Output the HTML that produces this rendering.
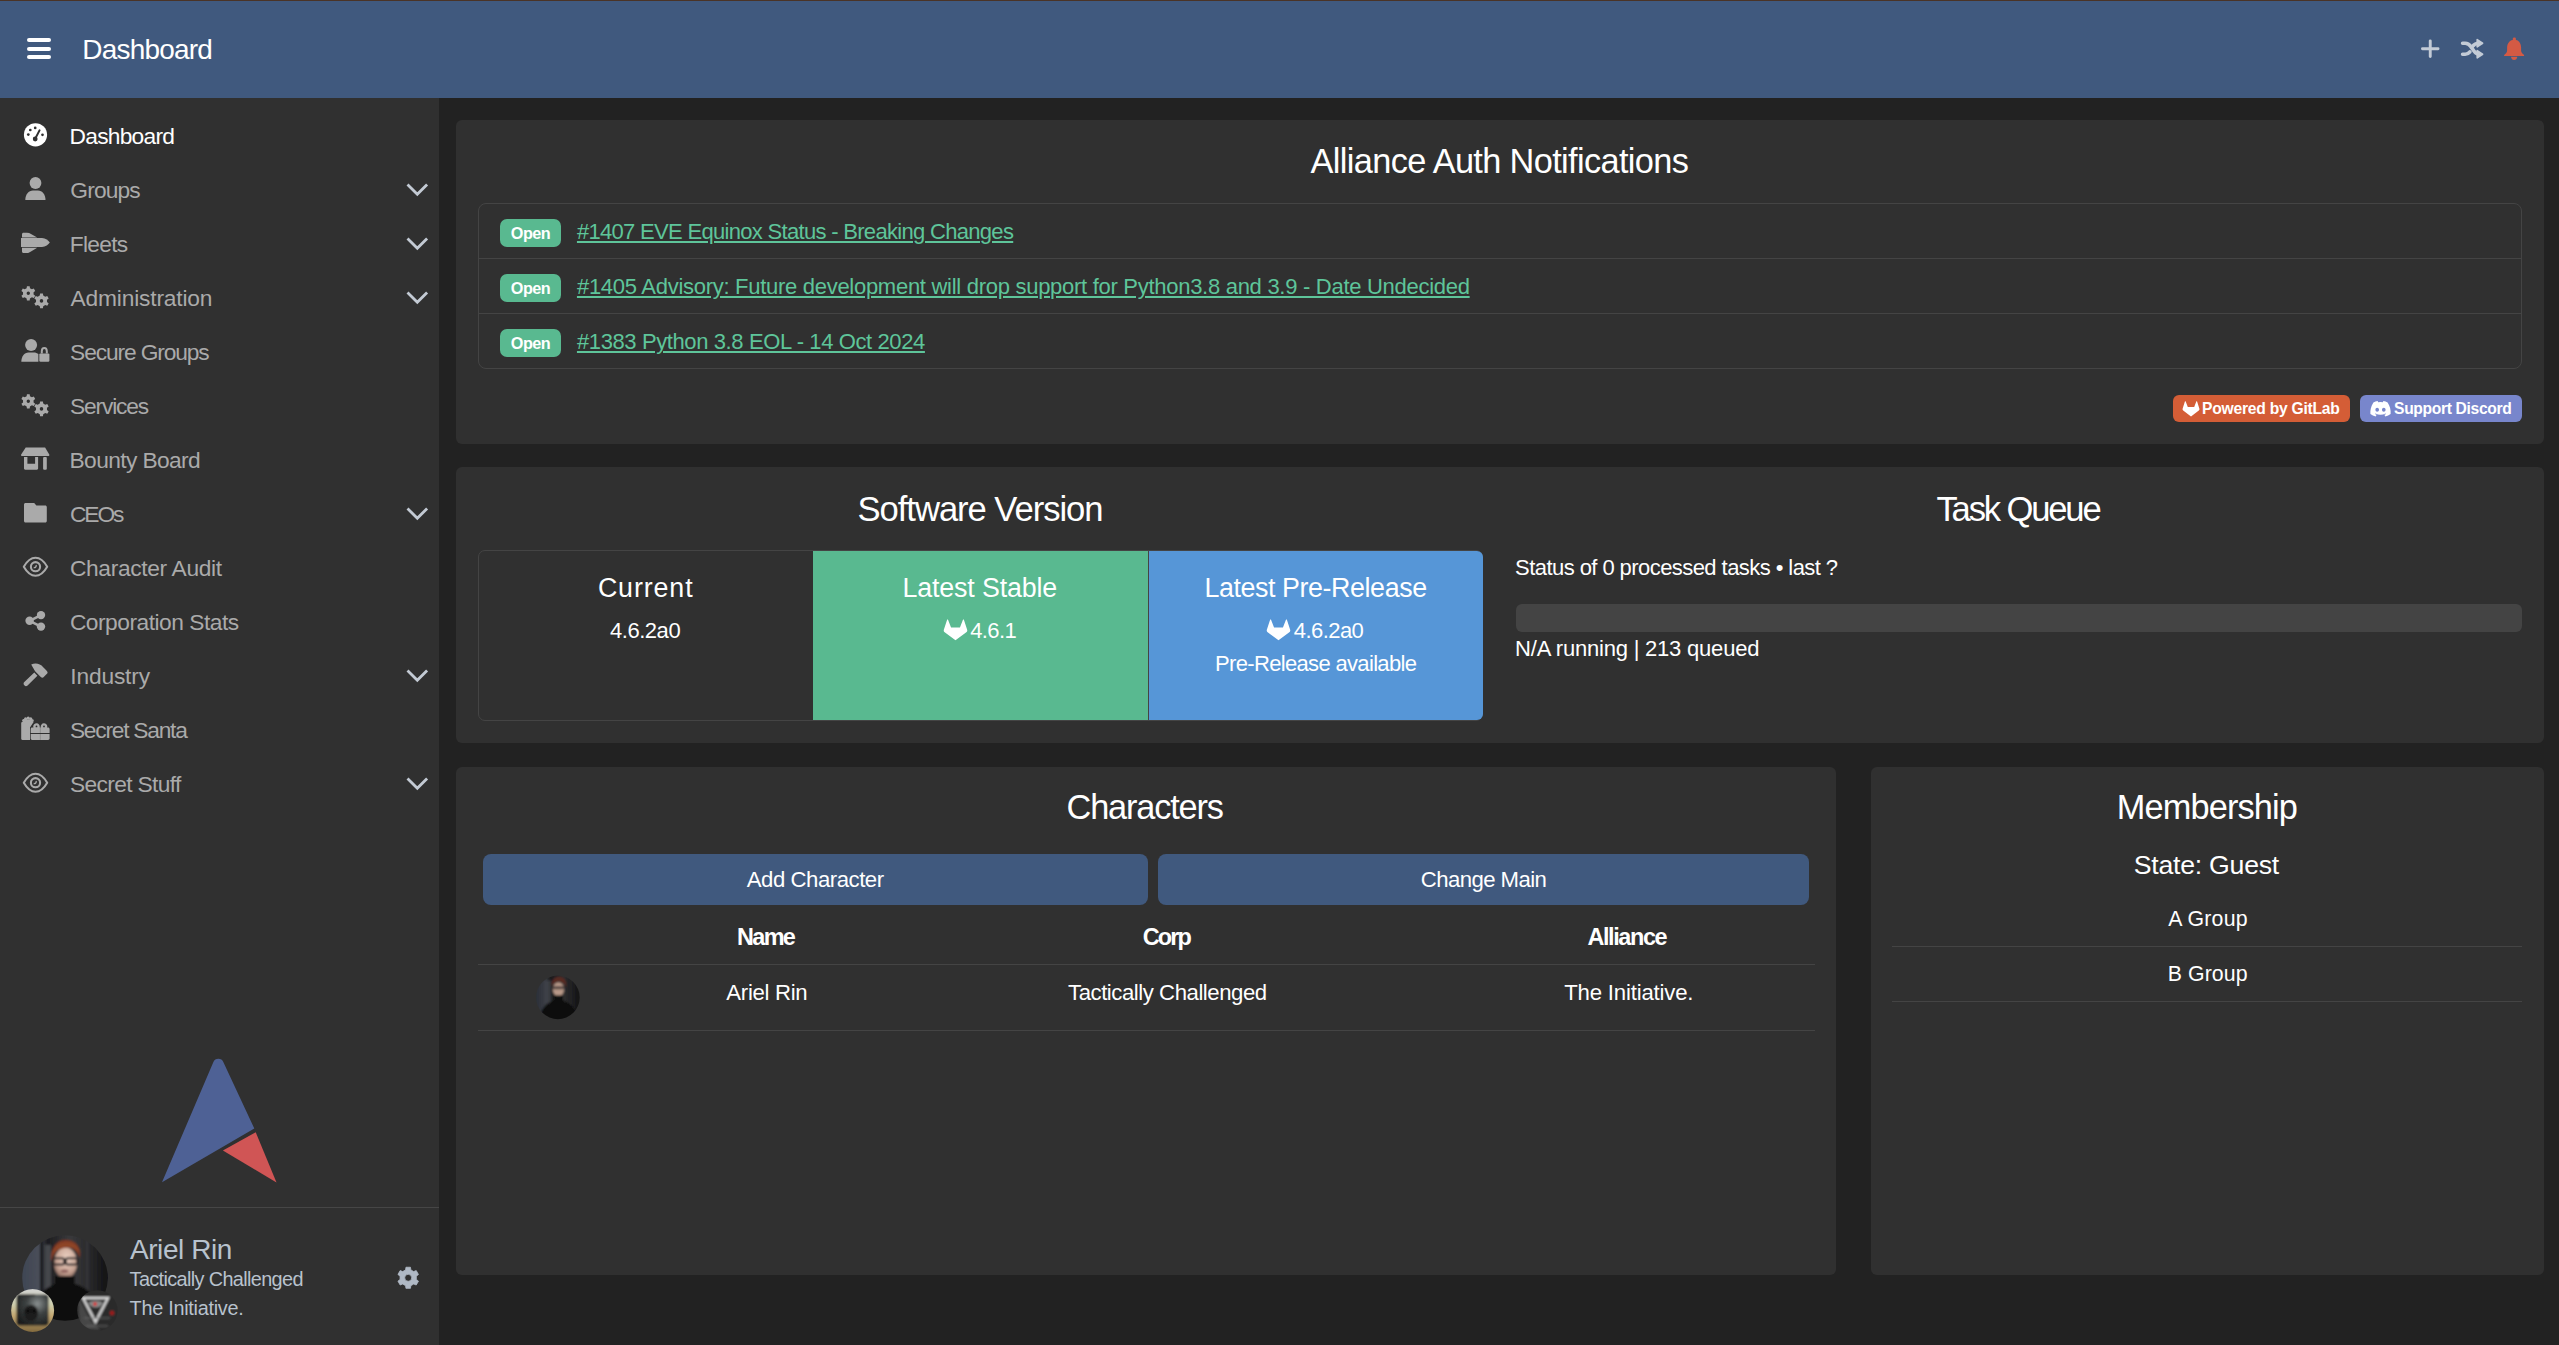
<!DOCTYPE html>
<html><head><meta charset="utf-8"><title>Dashboard</title>
<style>
html,body{margin:0;padding:0;}
body{width:2559px;height:1345px;background:#222222;position:relative;overflow:hidden;font-family:"Liberation Sans",sans-serif;}
.t{position:absolute;white-space:nowrap;line-height:1;}
.r{position:absolute;}
.a{position:absolute;overflow:visible;}
</style></head><body>
<div class="r" style="left:0px;top:0px;width:2559px;height:1px;background:#4a3326;border-radius:0;"></div>
<div class="r" style="left:0px;top:1px;width:2559px;height:97px;background:#40597e;border-radius:0;"></div>
<div class="r" style="left:26.6px;top:38.2px;width:24.5px;height:4.299999999999997px;background:#ffffff;border-radius:2.2px;"></div>
<div class="r" style="left:26.6px;top:46.8px;width:24.5px;height:4.299999999999997px;background:#ffffff;border-radius:2.2px;"></div>
<div class="r" style="left:26.6px;top:55.0px;width:24.5px;height:4.299999999999997px;background:#ffffff;border-radius:2.2px;"></div>
<div class="t" style="left:82.25px;top:35.95px;font-size:27.97px;letter-spacing:-0.779px;color:#fff;">Dashboard</div>
<svg class="a" style="left:2418px;top:37px" width="26" height="24" viewBox="2418 37 26 24"><path d="M2430.25 40.85V56.55M2422.45 48.7H2438.05" stroke="#c3cbd6" stroke-width="2.9" stroke-linecap="round" fill="none"/></svg>
<svg class="a" style="left:2455px;top:34px" width="34" height="30" viewBox="2455 34 34 30"><path d="M2462.6 43.3H2465.2C2467.9 43.3 2469.3 44.4 2470.8 46.6L2474.2 51.2C2475.7 53.3 2477 54.2 2479.2 54.2" stroke="#c3cbd6" stroke-width="3.6" stroke-linecap="round" fill="none"/><path d="M2462.6 54.2H2465.2C2467.6 54.2 2468.8 53.3 2469.9 51.9M2472.5 46.4C2474 44.3 2475.4 43.3 2479.2 43.3" stroke="#c3cbd6" stroke-width="3.6" stroke-linecap="round" fill="none"/><path d="M2477.2 39.6L2482.6 43.25L2477.2 46.9Z M2477.2 50.6L2482.6 54.25L2477.2 57.9Z" fill="#c3cbd6" stroke="#c3cbd6" stroke-width="1.6" stroke-linejoin="round"/></svg>
<svg class="a" style="left:2500px;top:34px" width="28" height="30" viewBox="2500 34 28 30"><rect x="2512.8" y="37.4" width="3.1" height="3.6" rx="1.3" fill="#d45a44"/><path d="M2514.3 39.7C2518.6 39.7 2521.1 43.2 2521.1 47.6V50.4C2521.1 52.2 2522.2 53.5 2523.6 54.4C2524 54.7 2524.1 55.1 2524.1 55.4V55.9H2504.1V55.4C2504.1 55.1 2504.3 54.7 2504.6 54.4C2506 53.5 2507.1 52.2 2507.1 50.4V47.6C2507.1 43.2 2510 39.7 2514.3 39.7Z" fill="#d45a44"/><path d="M2511 56.8H2517.3C2517.1 58.8 2515.9 60.1 2514.15 60.1C2512.4 60.1 2511.2 58.8 2511 56.8Z" fill="#d45a44"/></svg>
<div class="r" style="left:0px;top:98px;width:439px;height:1247px;background:#303030;border-radius:0;"></div>
<div class="t" style="left:69.59px;top:125.39px;font-size:22.75px;letter-spacing:-0.749px;color:#ffffff;">Dashboard</div>
<div class="t" style="left:70.27px;top:179.39px;font-size:22.75px;letter-spacing:-0.828px;color:#aaaaaa;">Groups</div>
<svg class="a" style="left:404px;top:180.1px" width="26" height="20" viewBox="0 0 26 20"><path d="M4.5 5.5l8.8 8.8 8.8-8.8" stroke="#c3cad4" stroke-width="2.8" stroke-linecap="square" fill="none"/></svg>
<div class="t" style="left:69.76px;top:233.39px;font-size:22.75px;letter-spacing:-0.708px;color:#aaaaaa;">Fleets</div>
<svg class="a" style="left:404px;top:234.1px" width="26" height="20" viewBox="0 0 26 20"><path d="M4.5 5.5l8.8 8.8 8.8-8.8" stroke="#c3cad4" stroke-width="2.8" stroke-linecap="square" fill="none"/></svg>
<div class="t" style="left:70.56px;top:287.39px;font-size:22.75px;letter-spacing:-0.169px;color:#aaaaaa;">Administration</div>
<svg class="a" style="left:404px;top:288.1px" width="26" height="20" viewBox="0 0 26 20"><path d="M4.5 5.5l8.8 8.8 8.8-8.8" stroke="#c3cad4" stroke-width="2.8" stroke-linecap="square" fill="none"/></svg>
<div class="t" style="left:70.10px;top:341.39px;font-size:22.75px;letter-spacing:-1.114px;color:#aaaaaa;">Secure Groups</div>
<div class="t" style="left:69.94px;top:395.39px;font-size:22.75px;letter-spacing:-1.136px;color:#aaaaaa;">Services</div>
<div class="t" style="left:69.54px;top:449.39px;font-size:22.75px;letter-spacing:-0.605px;color:#aaaaaa;">Bounty Board</div>
<div class="t" style="left:69.94px;top:503.39px;font-size:22.75px;letter-spacing:-2.077px;color:#aaaaaa;">CEOs</div>
<svg class="a" style="left:404px;top:504.1px" width="26" height="20" viewBox="0 0 26 20"><path d="M4.5 5.5l8.8 8.8 8.8-8.8" stroke="#c3cad4" stroke-width="2.8" stroke-linecap="square" fill="none"/></svg>
<div class="t" style="left:69.94px;top:557.39px;font-size:22.75px;letter-spacing:-0.330px;color:#aaaaaa;">Character Audit</div>
<div class="t" style="left:69.94px;top:611.39px;font-size:22.75px;letter-spacing:-0.492px;color:#aaaaaa;">Corporation Stats</div>
<div class="t" style="left:70.37px;top:665.39px;font-size:22.75px;letter-spacing:-0.181px;color:#aaaaaa;">Industry</div>
<svg class="a" style="left:404px;top:666.1px" width="26" height="20" viewBox="0 0 26 20"><path d="M4.5 5.5l8.8 8.8 8.8-8.8" stroke="#c3cad4" stroke-width="2.8" stroke-linecap="square" fill="none"/></svg>
<div class="t" style="left:69.94px;top:719.39px;font-size:22.75px;letter-spacing:-1.237px;color:#aaaaaa;">Secret Santa</div>
<div class="t" style="left:69.94px;top:773.39px;font-size:22.75px;letter-spacing:-0.640px;color:#aaaaaa;">Secret Stuff</div>
<svg class="a" style="left:404px;top:774.1px" width="26" height="20" viewBox="0 0 26 20"><path d="M4.5 5.5l8.8 8.8 8.8-8.8" stroke="#c3cad4" stroke-width="2.8" stroke-linecap="square" fill="none"/></svg>
<svg class="a" style="left:20px;top:120px" width="32" height="32" viewBox="20 120 32 32"><circle cx="35.5" cy="134.8" r="11.6" fill="#ffffff"/><circle cx="35.2" cy="127.9" r="1.35" fill="#303030"/><circle cx="30.3" cy="130.0" r="1.35" fill="#303030"/><circle cx="28.3" cy="134.6" r="1.35" fill="#303030"/><circle cx="42.5" cy="134.8" r="1.35" fill="#303030"/><path d="M35.3 138.5 L39.6 130.3" stroke="#303030" stroke-width="1.9" stroke-linecap="round"/><circle cx="35.2" cy="139.0" r="2.4" fill="#303030"/></svg>
<svg class="a" style="left:20px;top:172px" width="32" height="32" viewBox="20 172 32 32"><circle cx="35.5" cy="183.0" r="5.9" fill="#aaaaaa"/><path d="M25.3 200.1 C25.3 194.6 28.6 190.6 33.0 190.6 H38.0 C42.3 190.6 45.5 194.6 45.5 200.1 Z" fill="#aaaaaa"/></svg>
<svg class="a" style="left:15px;top:225px" width="40" height="35" viewBox="15 225 40 35"><g transform="translate(15 225)" fill="#aaaaaa"><path d="M7 9.3 C7 8.4 7.6 7.8 8.6 7.8 H12 C13.5 7.8 14.8 8.2 16 8.9 L22.2 12.5 H7 Z"/><path d="M6 13.1 H27 C30.5 13.4 33.5 15.6 34.8 17.6 C33.5 19.6 30.5 21.8 27 22.1 H6 Z"/><path d="M7 22.8 H22.2 L16 26.4 C14.8 27.1 13.5 28 12 28 H8.6 C7.6 28 7 27.4 7 26.5 Z"/></g></svg>
<svg class="a" style="left:15px;top:280px" width="40" height="35" viewBox="15 280 40 35"><path d="M29.67 300.47 L26.93 300.47 L26.63 298.44 L24.69 297.31 L22.77 298.07 L21.41 295.70 L23.02 294.42 L23.02 292.18 L21.41 290.90 L22.77 288.53 L24.69 289.29 L26.63 288.16 L26.93 286.13 L29.67 286.13 L29.97 288.16 L31.91 289.29 L33.83 288.53 L35.19 290.90 L33.58 292.18 L33.58 294.42 L35.19 295.70 L33.83 298.07 L31.91 297.31 L29.97 298.44Z M30.00 293.30 A1.7 1.7 0 1 0 26.60 293.30 A1.7 1.7 0 1 0 30.00 293.30Z" fill="#aaaaaa" fill-rule="evenodd"/><path d="M42.92 308.37 L40.08 308.37 L39.77 306.23 L37.75 305.06 L35.75 305.87 L34.32 303.40 L36.02 302.06 L36.02 299.74 L34.32 298.40 L35.75 295.93 L37.75 296.74 L39.77 295.57 L40.08 293.43 L42.92 293.43 L43.23 295.57 L45.25 296.74 L47.25 295.93 L48.68 298.40 L46.98 299.74 L46.98 302.06 L48.68 303.40 L47.25 305.87 L45.25 305.06 L43.23 306.23Z M43.30 300.90 A1.8 1.8 0 1 0 39.70 300.90 A1.8 1.8 0 1 0 43.30 300.90Z" fill="#aaaaaa" fill-rule="evenodd"/></svg>
<svg class="a" style="left:15px;top:388px" width="40" height="35" viewBox="15 388 40 35"><path d="M29.67 408.47 L26.93 408.47 L26.63 406.44 L24.69 405.31 L22.77 406.07 L21.41 403.70 L23.02 402.42 L23.02 400.18 L21.41 398.90 L22.77 396.53 L24.69 397.29 L26.63 396.16 L26.93 394.13 L29.67 394.13 L29.97 396.16 L31.91 397.29 L33.83 396.53 L35.19 398.90 L33.58 400.18 L33.58 402.42 L35.19 403.70 L33.83 406.07 L31.91 405.31 L29.97 406.44Z M30.00 401.30 A1.7 1.7 0 1 0 26.60 401.30 A1.7 1.7 0 1 0 30.00 401.30Z" fill="#aaaaaa" fill-rule="evenodd"/><path d="M42.92 416.37 L40.08 416.37 L39.77 414.23 L37.75 413.06 L35.75 413.87 L34.32 411.40 L36.02 410.06 L36.02 407.74 L34.32 406.40 L35.75 403.93 L37.75 404.74 L39.77 403.57 L40.08 401.43 L42.92 401.43 L43.23 403.57 L45.25 404.74 L47.25 403.93 L48.68 406.40 L46.98 407.74 L46.98 410.06 L48.68 411.40 L47.25 413.87 L45.25 413.06 L43.23 414.23Z M43.30 408.90 A1.8 1.8 0 1 0 39.70 408.90 A1.8 1.8 0 1 0 43.30 408.90Z" fill="#aaaaaa" fill-rule="evenodd"/></svg>
<svg class="a" style="left:15px;top:335px" width="40" height="32" viewBox="15 335 40 32"><circle cx="31.1" cy="345.1" r="6" fill="#aaaaaa"/><path d="M21.3 361.8 C21.3 356.5 24.3 352.4 28.5 352.4 H33.8 C35.6 352.4 37.2 353.0 38.4 354.0 V361.8 Z" fill="#aaaaaa"/><path d="M41.8 353.6 V351.3 C41.8 349.2 43 347.9 44.3 347.9 C45.6 347.9 46.8 349.2 46.8 351.3 V353.6" stroke="#aaaaaa" stroke-width="2" fill="none"/><rect x="39.3" y="353.4" width="10.1" height="8.4" rx="1.2" fill="#aaaaaa"/></svg>
<svg class="a" style="left:15px;top:440px" width="40" height="35" viewBox="15 440 40 35"><g transform="translate(15 440)" fill="#aaaaaa"><path d="M10.7 7.4 H30.1 L34.4 14.8 C34.4 15.6 34 16.1 33.3 16.1 H7.1 C6.4 16.1 6 15.6 6 14.8 Z"/><path d="M9 17.1 H12.4 V23.7 H20.1 V17.1 H23.1 V28.6 C23.1 29.3 22.6 29.8 21.9 29.8 H10.2 C9.5 29.8 9 29.3 9 28.6 Z"/><rect x="28.1" y="17.1" width="3.7" height="12.7" rx="1"/></g></svg>
<svg class="a" style="left:15px;top:495px" width="40" height="35" viewBox="15 495 40 35"><g transform="translate(15 440)" fill="#aaaaaa"><path d="M9 64.4 C9 63.6 9.7 62.9 10.5 62.9 H19.2 L21.4 65.6 H30.3 C31.1 65.6 31.8 66.3 31.8 67.1 V81.1 C31.8 81.9 31.1 82.6 30.3 82.6 H10.5 C9.7 82.6 9 81.9 9 81.1 Z"/></g></svg>
<svg class="a" style="left:19px;top:553px" width="32" height="26" viewBox="19 553 32 26"><path d="M23.8 566.7 C27.5 560.2 31.0 557.7 35.5 557.7 C40.0 557.7 43.5 560.2 47.2 566.7 C43.5 573.2 40.0 575.7 35.5 575.7 C31.0 575.7 27.5 573.2 23.8 566.7 Z" stroke="#aaaaaa" stroke-width="2.1" fill="none" stroke-linejoin="round"/><circle cx="35.5" cy="566.7" r="4.6" stroke="#aaaaaa" stroke-width="2.1" fill="none"/><path d="M33.7 567.5 A2 2 0 0 0 36.1 564.9000000000001" stroke="#aaaaaa" stroke-width="1.4" fill="none"/></svg>
<svg class="a" style="left:19px;top:769px" width="32" height="26" viewBox="19 769 32 26"><path d="M23.8 782.7 C27.5 776.2 31.0 773.7 35.5 773.7 C40.0 773.7 43.5 776.2 47.2 782.7 C43.5 789.2 40.0 791.7 35.5 791.7 C31.0 791.7 27.5 789.2 23.8 782.7 Z" stroke="#aaaaaa" stroke-width="2.1" fill="none" stroke-linejoin="round"/><circle cx="35.5" cy="782.7" r="4.6" stroke="#aaaaaa" stroke-width="2.1" fill="none"/><path d="M33.7 783.5 A2 2 0 0 0 36.1 780.9000000000001" stroke="#aaaaaa" stroke-width="1.4" fill="none"/></svg>
<svg class="a" style="left:15px;top:605px" width="40" height="32" viewBox="15 605 40 32"><g transform="translate(15 550)" fill="#aaaaaa"><circle cx="14.6" cy="70.8" r="4.2"/><circle cx="26" cy="65.1" r="4.2"/><circle cx="26" cy="76.6" r="4.2"/><path d="M14.6 70.8 L26 65.1 M14.6 70.8 L26 76.6" stroke="#aaaaaa" stroke-width="2.6"/></g></svg>
<svg class="a" style="left:15px;top:658px" width="40" height="35" viewBox="15 658 40 35"><g transform="translate(15 550)" fill="#aaaaaa"><path d="M9.6 135.6 C8.4 134.6 8.2 133 9.3 132 L19.3 122.5 L22.4 125.8 L12.6 135.5 C11.6 136.4 10.4 136.5 9.6 135.6 Z"/><path d="M16.2 114.5 C20.5 112.6 25.3 113.6 28.2 117.2 L29.5 118.6 L31.2 120.2 C32.5 121.4 33 122.7 32.2 123.6 L28.5 127.3 C27.7 128 26.6 127.7 25.5 126.7 L24.8 126 L20.3 121.6 C19.2 119.8 18.4 118.3 16.2 114.5 Z"/></g></svg>
<svg class="a" style="left:15px;top:710px" width="40" height="35" viewBox="15 710 40 35"><g transform="translate(15 710)" fill="#aaaaaa"><path d="M6.2 13.2 C6.2 12.5 6.7 12 7.4 12 H18.6 L15.0 17.4 V29.9 H7.4 C6.7 29.9 6.2 29.4 6.2 28.7 Z"/><circle cx="8.6" cy="10.6" r="1.5"/><circle cx="10.6" cy="8.9" r="1.6"/><circle cx="13.2" cy="8.2" r="1.6"/><circle cx="15.7" cy="8.8" r="1.6"/><circle cx="17.4" cy="10.7" r="1.4"/><rect x="8" y="9.5" width="9.6" height="3"/><path d="M15.7 18.9 C15.7 18.1 16.3 17.4 17.1 17.4 H33.1 C33.9 17.4 34.6 18.1 34.6 18.9 V22.9 H15.7 Z"/><path d="M15.7 23.9 H34.6 V28.5 C34.6 29.3 33.9 29.9 33.1 29.9 H17.1 C16.3 29.9 15.7 29.3 15.7 28.5 Z"/><path d="M21.7 13.2 C19.6 13.2 18.2 14.8 18.2 16.6 C18.2 17.6 18.6 18.2 19 18.5 H24.8 V17 C24.8 15 23.6 13.2 21.7 13.2Z M21.4 15.7 a1 1 0 1 0 0.01 0Z"/><path d="M28.8 13.2 C30.9 13.2 32.3 14.8 32.3 16.6 C32.3 17.6 31.9 18.2 31.5 18.5 H25.7 V17 C25.7 15 26.9 13.2 28.8 13.2Z"/><circle cx="21.5" cy="16.4" r="0.9" fill="#303030"/><circle cx="29" cy="16.4" r="0.9" fill="#303030"/><rect x="24.9" y="17.4" width="0.6" height="12.5" fill="#303030" opacity="0.35"/></g></svg>
<svg class="a" style="left:150px;top:1050px" width="140" height="140" viewBox="150 1050 140 140"><path d="M162 1182.2 L254.3 1128.5 L223.3 1061.93 A5.41 5.41 0 0 0 213.41 1062.07 Z" fill="#4e6195"/><path d="M255.7 1132.2 L276.5 1182.4 L222.9 1150.6 Z" fill="#d05555"/></svg>
<div class="r" style="left:0px;top:1207px;width:439px;height:1px;background:#464646;border-radius:0;"></div>
<svg class="a" style="left:0px;top:1225px" width="125" height="115" viewBox="0 1225 125 115">
<defs>
<clipPath id="c1"><circle cx="65" cy="1278" r="42.8"/></clipPath>
<clipPath id="c2"><circle cx="32.6" cy="1310.5" r="21.5"/></clipPath>
<clipPath id="c3"><circle cx="97.4" cy="1310.5" r="20.3"/></clipPath>
<filter id="bl" x="-10%" y="-10%" width="120%" height="120%"><feGaussianBlur stdDeviation="0.9"/></filter>
<linearGradient id="corpo" x1="0" y1="0" x2="0" y2="1"><stop offset="0" stop-color="#d4d4d4"/><stop offset="0.35" stop-color="#cfd0b0"/><stop offset="0.6" stop-color="#c4a872"/><stop offset="1" stop-color="#7a6238"/></linearGradient>
<radialGradient id="corpi" cx="0.65" cy="0.3" r="0.75"><stop offset="0" stop-color="#8a9090"/><stop offset="0.45" stop-color="#3e4242"/><stop offset="1" stop-color="#1c1e1e"/></radialGradient>
<filter id="bl2" x="-10%" y="-10%" width="120%" height="120%"><feGaussianBlur stdDeviation="1.0"/></filter>
<linearGradient id="ag1" x1="0" y1="0" x2="1" y2="0"><stop offset="0" stop-color="#3e4452"/><stop offset="0.22" stop-color="#4a4f5a"/><stop offset="0.3" stop-color="#1c1c1e"/><stop offset="0.55" stop-color="#3a3a3c"/><stop offset="0.8" stop-color="#262628"/><stop offset="1" stop-color="#0e0e10"/></linearGradient>
<radialGradient id="face" cx="0.55" cy="0.35" r="0.65"><stop offset="0" stop-color="#ecd2c4"/><stop offset="0.7" stop-color="#c8a494"/><stop offset="1" stop-color="#8a6a5e"/></radialGradient>
<radialGradient id="corp" cx="0.5" cy="0.55" r="0.55"><stop offset="0" stop-color="#3c3c3c"/><stop offset="0.7" stop-color="#2a2a2a"/><stop offset="0.86" stop-color="#505050"/><stop offset="1" stop-color="#b09a5e"/></radialGradient>
</defs>
<g clip-path="url(#c1)"><g filter="url(#bl)">
<rect x="20" y="1233" width="90" height="90" fill="url(#ag1)"/>
<rect x="40" y="1238" width="2.5" height="60" fill="#101010"/>
<rect x="45" y="1245" width="6" height="45" fill="#55575e" opacity="0.7"/>
<rect x="86" y="1240" width="2.5" height="50" fill="#3a3a3a" opacity="0.8"/>
<path d="M51 1262 C50 1247 57 1240 66 1240 C75 1240 81 1246 80 1258 C77 1250 72 1247 66 1247 C59 1247 54 1252 51 1262 Z" fill="#7e3822"/>
<ellipse cx="65.5" cy="1263" rx="11.5" ry="15.5" fill="url(#face)"/>
<path d="M52 1253 C55 1245 61 1242 67 1242 C73 1242 78 1245 80 1252 C75 1248 70 1247 64 1248 C59 1249 55 1251 52 1256Z" fill="#8e4428"/>
<rect x="53.5" y="1258.2" width="10.5" height="6.2" rx="1.5" fill="none" stroke="#2e2828" stroke-width="2"/>
<rect x="66" y="1258.2" width="11" height="6.2" rx="1.5" fill="none" stroke="#2e2828" stroke-width="2"/>
<ellipse cx="64.5" cy="1271" rx="3.8" ry="1.5" fill="#8a5a58"/>
<path d="M55 1276 H75 V1290 H55Z" fill="#0d0d0d"/>
<path d="M30 1330 C32 1300 42 1288 56 1284 H75 C90 1288 100 1300 102 1330Z" fill="#0b0b0b"/>
</g></g>
<g clip-path="url(#c2)"><g filter="url(#bl2)">
<rect x="10" y="1288" width="46" height="46" fill="url(#corpo)"/>
<rect x="16.5" y="1294.5" width="32" height="31" rx="3" fill="url(#corpi)"/>
<path d="M17 1294.5 H35 V1296 H18.5 V1315 H17Z" fill="#222"/>
<ellipse cx="31" cy="1313" rx="7" ry="8" fill="#1e1e1e"/>
<circle cx="28" cy="1311" r="2" fill="#101010"/><circle cx="34" cy="1311" r="2" fill="#101010"/>
</g></g>
<g clip-path="url(#c3)"><g filter="url(#bl2)">
<rect x="76" y="1289" width="44" height="44" fill="#2c2c2c"/>
<path d="M78 1296 L90 1320 L100 1330 L80 1328Z" fill="#5a5a5a" opacity="0.6"/>
<path d="M83 1298 H108 L95.5 1322Z" fill="none" stroke="#d8d8d8" stroke-width="2.4"/>
<path d="M88 1303 C92 1300 100 1300 103 1303 C100 1309 92 1309 88 1303Z" fill="#888"/>
<circle cx="95" cy="1304" r="1.8" fill="#e02020"/>
<circle cx="112" cy="1313" r="2.2" fill="#a01818"/>
<path d="M84 1318 L110 1318 M86 1326 L108 1326" stroke="#777" stroke-width="0.8"/>
</g></g>
</svg>
<div class="t" style="left:129.96px;top:1235.78px;font-size:27.97px;letter-spacing:-0.412px;color:#b8c2cd;">Ariel Rin</div>
<div class="t" style="left:129.61px;top:1270.18px;font-size:19.86px;letter-spacing:-0.635px;color:#b8c2cd;">Tactically Challenged</div>
<div class="t" style="left:129.61px;top:1298.86px;font-size:19.86px;letter-spacing:-0.288px;color:#b8c2cd;">The Initiative.</div>
<svg class="a" style="left:394px;top:1263px" width="28" height="29" viewBox="394 1263 28 29"><path d="M405.95 1267.24 L410.45 1267.24 L410.85 1269.93 L413.69 1271.57 L416.23 1270.57 L418.47 1274.46 L416.34 1276.16 L416.34 1279.44 L418.47 1281.14 L416.23 1285.03 L413.69 1284.03 L410.85 1285.67 L410.45 1288.36 L405.95 1288.36 L405.55 1285.67 L402.71 1284.03 L400.17 1285.03 L397.93 1281.14 L400.06 1279.44 L400.06 1276.16 L397.93 1274.46 L400.17 1270.57 L402.71 1271.57 L405.55 1269.93Z M411.70 1277.80 A3.5 3.5 0 1 0 404.70 1277.80 A3.5 3.5 0 1 0 411.70 1277.80Z" fill="#b0b9c5" fill-rule="evenodd" stroke="#b0b9c5" stroke-width="0.8" stroke-linejoin="round"/></svg>
<div class="r" style="left:456px;top:120px;width:2088px;height:324px;background:#303030;border-radius:6px;"></div>
<div class="t" style="left:1310.56px;top:144.14px;font-size:34.35px;letter-spacing:-0.642px;color:#fff;">Alliance Auth Notifications</div>
<div class="r" style="left:478px;top:203px;width:2044px;height:166px;background:transparent;border-radius:8px;border:1px solid #444444;box-sizing:border-box;"></div>
<div class="r" style="left:479px;top:258px;width:2042px;height:1px;background:#444444;border-radius:0;"></div>
<div class="r" style="left:479px;top:313px;width:2042px;height:1px;background:#444444;border-radius:0;"></div>
<div class="r" style="left:500px;top:219px;width:61px;height:28px;background:#59b990;border-radius:7px;"></div>
<div class="t" style="left:510.83px;top:225.03px;font-size:16.23px;letter-spacing:-0.550px;font-weight:bold;color:#ffffff;">Open</div>
<div class="t" style="left:576.95px;top:221.18px;font-size:22.03px;letter-spacing:-0.698px;color:#5ec59a;text-decoration:underline;text-decoration-thickness:2px;text-underline-offset:2px;">#1407 EVE Equinox Status - Breaking Changes</div>
<div class="r" style="left:500px;top:274px;width:61px;height:28px;background:#59b990;border-radius:7px;"></div>
<div class="t" style="left:510.83px;top:280.03px;font-size:16.23px;letter-spacing:-0.550px;font-weight:bold;color:#ffffff;">Open</div>
<div class="t" style="left:576.95px;top:276.18px;font-size:22.03px;letter-spacing:-0.290px;color:#5ec59a;text-decoration:underline;text-decoration-thickness:2px;text-underline-offset:2px;">#1405 Advisory: Future development will drop support for Python3.8 and 3.9 - Date Undecided</div>
<div class="r" style="left:500px;top:329px;width:61px;height:28px;background:#59b990;border-radius:7px;"></div>
<div class="t" style="left:510.83px;top:335.03px;font-size:16.23px;letter-spacing:-0.550px;font-weight:bold;color:#ffffff;">Open</div>
<div class="t" style="left:576.95px;top:331.18px;font-size:22.03px;letter-spacing:-0.397px;color:#5ec59a;text-decoration:underline;text-decoration-thickness:2px;text-underline-offset:2px;">#1383 Python 3.8 EOL - 14 Oct 2024</div>
<div class="r" style="left:2173px;top:395px;width:177px;height:27px;background:#d45d36;border-radius:6px;"></div>
<svg class="a" style="left:2182px;top:400px" width="18" height="17" viewBox="0 0 18 17"><path d="M9 16.5L1.2 10.6c-.6-.5-.8-1.2-.6-1.9L2.9 1.5c.1-.4.6-.4.8 0L5.8 7h6.4l2.1-5.5c.2-.4.7-.4.8 0l2.3 7.2c.2.7 0 1.4-.6 1.9z" fill="#fff"/></svg>
<div class="t" style="left:2202.05px;top:400.70px;font-size:15.65px;letter-spacing:-0.241px;font-weight:bold;color:#ffffff;">Powered by GitLab</div>
<div class="r" style="left:2360px;top:395px;width:162px;height:27px;background:#7886cc;border-radius:6px;"></div>
<svg class="a" style="left:2370px;top:401px" width="21" height="16" viewBox="0 0 21 16"><path d="M17.6 1.4A17 17 0 0 0 13.4.1l-.6 1.1a15.6 15.6 0 0 0-4.6 0L7.6.1a17 17 0 0 0-4.2 1.3C.8 5.4.1 9.2.4 13a17 17 0 0 0 5.2 2.6l1.1-1.8c-.6-.2-1.2-.5-1.7-.9l.4-.3a12 12 0 0 0 10.2 0l.4.3c-.5.4-1.1.7-1.7.9l1.1 1.8A17 17 0 0 0 20.6 13c.4-4.4-.7-8.2-3-11.6zM7.2 10.7c-1 0-1.8-.9-1.8-2s.8-2 1.8-2 1.8.9 1.8 2-.8 2-1.8 2zm6.6 0c-1 0-1.8-.9-1.8-2s.8-2 1.8-2 1.8.9 1.8 2-.8 2-1.8 2z" fill="#fff"/></svg>
<div class="t" style="left:2394.05px;top:400.70px;font-size:15.65px;letter-spacing:-0.339px;font-weight:bold;color:#ffffff;">Support Discord</div>
<div class="r" style="left:456px;top:467px;width:2088px;height:276px;background:#303030;border-radius:6px;"></div>
<div class="t" style="left:857.54px;top:491.73px;font-size:34.64px;letter-spacing:-1.049px;color:#fff;">Software Version</div>
<div class="t" style="left:1936.44px;top:491.56px;font-size:34.64px;letter-spacing:-2.166px;color:#fff;">Task Queue</div>
<div class="r" style="left:478px;top:550px;width:1005px;height:171px;background:transparent;border-radius:7px;border:1px solid #444444;box-sizing:border-box;"></div>
<div class="r" style="left:813px;top:551px;width:335px;height:169px;background:#59b990;border-radius:0;"></div>
<div class="r" style="left:1148px;top:551px;width:335px;height:169px;background:#5696d7;border-radius:0 6px 6px 0;"></div>
<div class="r" style="left:1148px;top:551px;width:1px;height:169px;background:#444444;border-radius:0;"></div>
<div class="t" style="left:597.88px;top:574.55px;font-size:26.81px;letter-spacing:0.897px;color:#fff;">Current</div>
<div class="t" style="left:610.04px;top:620.22px;font-size:22.03px;letter-spacing:-0.477px;color:#fff;">4.6.2a0</div>
<div class="t" style="left:902.59px;top:574.55px;font-size:26.81px;letter-spacing:-0.152px;color:#fff;">Latest Stable</div>
<svg class="a" style="left:943px;top:618px" width="25" height="23" viewBox="0 0 18 17" preserveAspectRatio="none"><path d="M9 16.5L1.2 10.6c-.6-.5-.8-1.2-.6-1.9L2.9 1.5c.1-.4.6-.4.8 0L5.8 7h6.4l2.1-5.5c.2-.4.7-.4.8 0l2.3 7.2c.2.7 0 1.4-.6 1.9z" fill="#fff"/></svg>
<div class="t" style="left:970.22px;top:620.18px;font-size:22.03px;letter-spacing:-0.635px;color:#fff;">4.6.1</div>
<div class="t" style="left:1204.42px;top:575.28px;font-size:26.81px;letter-spacing:-0.397px;color:#fff;">Latest Pre-Release</div>
<svg class="a" style="left:1266px;top:618px" width="25" height="23" viewBox="0 0 18 17" preserveAspectRatio="none"><path d="M9 16.5L1.2 10.6c-.6-.5-.8-1.2-.6-1.9L2.9 1.5c.1-.4.6-.4.8 0L5.8 7h6.4l2.1-5.5c.2-.4.7-.4.8 0l2.3 7.2c.2.7 0 1.4-.6 1.9z" fill="#fff"/></svg>
<div class="t" style="left:1293.83px;top:619.90px;font-size:22.03px;letter-spacing:-0.572px;color:#fff;">4.6.2a0</div>
<div class="t" style="left:1215.10px;top:653.01px;font-size:22.03px;letter-spacing:-0.676px;color:#fff;">Pre-Release available</div>
<div class="t" style="left:1515.10px;top:556.79px;font-size:22.03px;letter-spacing:-0.571px;color:#fff;">Status of 0 processed tasks • last ?</div>
<div class="r" style="left:1516px;top:604px;width:1006px;height:28px;background:#444444;border-radius:6px;"></div>
<div class="t" style="left:1515.10px;top:638.18px;font-size:22.03px;letter-spacing:-0.216px;color:#fff;">N/A running | 213 queued</div>
<div class="r" style="left:456px;top:767px;width:1380px;height:508px;background:#303030;border-radius:6px;"></div>
<div class="t" style="left:1066.59px;top:790.02px;font-size:34.35px;letter-spacing:-1.171px;color:#fff;">Characters</div>
<div class="r" style="left:483px;top:854px;width:665px;height:51px;background:#40597e;border-radius:8px;"></div>
<div class="t" style="left:746.78px;top:869.21px;font-size:22.17px;letter-spacing:-0.462px;color:#fff;">Add Character</div>
<div class="r" style="left:1158px;top:854px;width:651px;height:51px;background:#40597e;border-radius:8px;"></div>
<div class="t" style="left:1420.71px;top:869.21px;font-size:22.17px;letter-spacing:-0.556px;color:#fff;">Change Main</div>
<div class="t" style="left:737.12px;top:926.30px;font-size:23.48px;letter-spacing:-1.740px;font-weight:bold;color:#ffffff;">Name</div>
<div class="t" style="left:1142.83px;top:926.30px;font-size:23.48px;letter-spacing:-1.930px;font-weight:bold;color:#ffffff;">Corp</div>
<div class="t" style="left:1587.46px;top:925.90px;font-size:23.48px;letter-spacing:-1.406px;font-weight:bold;color:#ffffff;">Alliance</div>
<div class="r" style="left:478px;top:964px;width:1337px;height:1px;background:#444444;border-radius:0;"></div>
<svg class="a" style="left:530px;top:970px" width="56" height="56" viewBox="530 970 56 56">
<defs><clipPath id="c4"><circle cx="557.9" cy="997.4" r="21.8"/></clipPath>
<filter id="bl4" x="-20%" y="-20%" width="140%" height="140%"><feGaussianBlur stdDeviation="1.6"/></filter>
<linearGradient id="ag4" x1="0" y1="0" x2="1" y2="0"><stop offset="0" stop-color="#262a33"/><stop offset="0.25" stop-color="#3a3d44"/><stop offset="0.35" stop-color="#1a1a1c"/><stop offset="0.6" stop-color="#2e2e30"/><stop offset="1" stop-color="#0c0c0e"/></linearGradient></defs>
<g clip-path="url(#c4)"><g filter="url(#bl4)" transform="translate(557.9 997.4) scale(0.509) translate(-65 -1278)">
<rect x="15" y="1228" width="100" height="100" fill="url(#ag4)"/>
<rect x="40" y="1245" width="12" height="45" fill="#4a4d55" opacity="0.6"/>
<path d="M52 1258 C52 1244 59 1238 67 1238 C76 1238 82 1244 81 1258 C78 1250 73 1247 67 1247 C61 1247 55 1250 52 1258 Z" fill="#5c2a22"/>
<ellipse cx="66" cy="1262" rx="11" ry="14" fill="#b89888"/>
<rect x="54" y="1256" width="24" height="6" rx="1.5" fill="#3a3030" opacity="0.8"/>
<path d="M57 1274 H75 V1290 H57Z" fill="#0d0d0d"/>
<path d="M25 1335 C28 1302 42 1288 58 1284 H74 C90 1288 104 1302 106 1335Z" fill="#0b0b0b"/>
</g></g></svg>
<div class="t" style="left:726.34px;top:982.22px;font-size:22.17px;letter-spacing:-0.295px;color:#fff;">Ariel Rin</div>
<div class="t" style="left:1068.04px;top:982.22px;font-size:22.17px;letter-spacing:-0.451px;color:#fff;">Tactically Challenged</div>
<div class="t" style="left:1564.17px;top:982.22px;font-size:22.17px;letter-spacing:-0.176px;color:#fff;">The Initiative.</div>
<div class="r" style="left:478px;top:1030px;width:1337px;height:1px;background:#444444;border-radius:0;"></div>
<div class="r" style="left:1871px;top:767px;width:673px;height:508px;background:#303030;border-radius:6px;"></div>
<div class="t" style="left:2116.69px;top:790.19px;font-size:34.35px;letter-spacing:-0.851px;color:#fff;">Membership</div>
<div class="t" style="left:2133.76px;top:852.28px;font-size:26.67px;letter-spacing:-0.248px;color:#fff;">State: Guest</div>
<div class="t" style="left:2168.17px;top:909.01px;font-size:21.30px;letter-spacing:0.207px;color:#fff;">A Group</div>
<div class="r" style="left:1892px;top:946px;width:630px;height:1px;background:#444444;border-radius:0;"></div>
<div class="t" style="left:2167.71px;top:963.96px;font-size:21.30px;letter-spacing:0.092px;color:#fff;">B Group</div>
<div class="r" style="left:1892px;top:1001px;width:630px;height:1px;background:#444444;border-radius:0;"></div>
</body></html>
